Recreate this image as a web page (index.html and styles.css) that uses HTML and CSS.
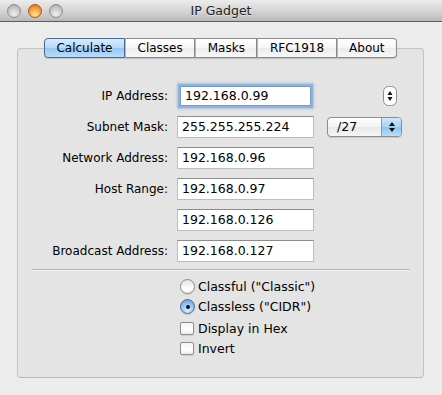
FILE: index.html
```html
<!DOCTYPE html>
<html lang="en">
<head>
  <meta charset="UTF-8" />
  <title>IP Gadget</title>
  <link rel="stylesheet" href="styles.css">
</head>
<body>
  <div class="titlebar">
    <div class="lights">
      <span class="light"></span>
      <span class="light light-orange"></span>
      <span class="light"></span>
    </div>
    <div class="title">IP Gadget</div>
  </div>

  <div class="content">
    <div class="tabs">
      <div class="tab selected">Calculate</div>
      <div class="tab">Classes</div>
      <div class="tab">Masks</div>
      <div class="tab">RFC1918</div>
      <div class="tab">About</div>
    </div>

    <div class="box">
      <div class="form">
        <label class="label">IP Address:</label>
        <div class="field focused">192.168.0.99</div>
        <div class="stepper">
          <svg width="14" height="20" viewBox="0 0 14 20">
            <rect x="0.5" y="0.5" width="13" height="19" rx="5" fill="#fdfdfd" stroke="#8d8d8d"/>
            <polygon points="7,5 4.5,9 9.5,9" fill="#111"/>
            <polygon points="7,15 4.5,11 9.5,11" fill="#111"/>
          </svg>
        </div>

        <label class="label">Subnet Mask:</label>
        <div class="field">255.255.255.224</div>
        <div class="popup">
          <span class="popup-text">/27</span>
          <span class="popup-arrows">
            <svg width="8" height="14" viewBox="0 0 8 14">
              <polygon points="4,2 1,6 7,6" fill="#111"/>
              <polygon points="4,12 1,8 7,8" fill="#111"/>
            </svg>
          </span>
        </div>

        <label class="label">Network Address:</label>
        <div class="field">192.168.0.96</div>
        <div></div>

        <label class="label">Host Range:</label>
        <div class="field">192.168.0.97</div>
        <div></div>

        <label class="label"></label>
        <div class="field">192.168.0.126</div>
        <div></div>

        <label class="label">Broadcast Address:</label>
        <div class="field">192.168.0.127</div>
        <div></div>
      </div>

      <div class="separator"></div>

      <div class="options">
        <div class="option"><span class="radio"></span>Classful ("Classic")</div>
        <div class="option"><span class="radio checked"></span>Classless ("CIDR")</div>
        <div class="option option-gap"><span class="checkbox"></span>Display in Hex</div>
        <div class="option"><span class="checkbox"></span>Invert</div>
      </div>
    </div>
  </div>
</body>
</html>
```

FILE: styles.css
```css
* {
  margin: 0;
  padding: 0;
  box-sizing: border-box;
}

body {
  width: 442px;
  height: 395px;
  overflow: hidden;
  background-color: #ececec;
  font-family: 'DejaVu Sans', 'Liberation Sans', sans-serif;
  font-size: 12px;
  color: #000;
}

/* title bar */
.titlebar {
  height: 22px;
  display: flex;
  align-items: center;
  position: relative;
  background: linear-gradient(#ececec, #d6d6d6 50%, #b9b9b9);
  border-bottom: 1px solid #5e5e5e;
}

.lights {
  display: flex;
  gap: 7px;
  padding-left: 7px;
  position: relative;
  z-index: 1;
}

.light {
  width: 14px;
  height: 14px;
  border-radius: 50%;
  border: 1px solid #8e8e8e;
  background: radial-gradient(circle at 50% 75%, #f0f0f0, #c8c8c8 55%, #a5a5a5);
}

.light-orange {
  border-color: #a8581a;
  background: radial-gradient(circle at 50% 80%, #ffe8a0, #f8a63a 50%, #d86a12);
}

.title {
  position: absolute;
  left: 0;
  right: 0;
  text-align: center;
  font-size: 12.5px;
  color: #222;
  text-shadow: 0 1px 0 rgba(255, 255, 255, 0.5);
}

/* content */
.content {
  padding: 16px 18px 0 17px;
}

.tabs {
  display: flex;
  justify-content: center;
  position: relative;
  z-index: 1;
}

.tab {
  height: 20px;
  line-height: 18px;
  padding: 0 11.5px;
  border: 1px solid #8a8a8a;
  border-left: 1px solid #b9b9b9;
  background: linear-gradient(#ffffff, #f6f6f6 50%, #ececec 51%, #f7f7f7);
  box-shadow: 0 1px 1px rgba(0, 0, 0, 0.15);
}

.tab:first-child {
  border-left-color: #6a6a6a;
  border-radius: 4px 0 0 4px;
}

.tab:last-child {
  border-radius: 0 4px 4px 0;
}

.tab.selected {
  border-color: #4d6a95;
  background: linear-gradient(#d8ecfd, #b4d9f8 50%, #97c7f4 51%, #b9dcfb);
}

.box {
  margin-top: -10px;
  height: 330px;
  border: 1px solid #c4c4c4;
  border-bottom-color: #b8b8b8;
  border-radius: 4px;
  background-color: #e4e4e4;
  padding-top: 36px;
}

.form {
  display: grid;
  grid-template-columns: 152px 137px 81px;
  grid-auto-rows: 22px;
  column-gap: 7px;
  row-gap: 9px;
  align-items: center;
}

.label {
  text-align: right;
  padding-right: 2px;
}

.field {
  height: 22px;
  line-height: 20px;
  padding-left: 4px;
  font-size: 12.5px;
  background-color: #fff;
  border: 1px solid #bdbdbd;
  border-top-color: #8c8c8c;
}

.field.focused {
  width: 131px;
  height: 20px;
  line-height: 18px;
  margin-left: 3px;
  padding-left: 4px;
  border-color: #7c9bc4;
  box-shadow: 0 0 0 2px #8fb3e0, 0 0 2px 3px rgba(120, 160, 215, 0.5);
}

.stepper {
  justify-self: end;
  margin-right: 5px;
  height: 20px;
}

.stepper svg {
  display: block;
}

.popup {
  justify-self: end;
  width: 75px;
  height: 20px;
  display: flex;
  border: 1px solid #8d8d8d;
  border-radius: 4px;
  overflow: hidden;
  background: linear-gradient(#ffffff, #f3f3f3 50%, #e8e8e8 51%, #f6f6f6);
  box-shadow: 0 1px 1px rgba(0, 0, 0, 0.12);
}

.popup-text {
  flex: 1;
  padding-left: 9px;
  line-height: 18px;
  font-size: 12.5px;
}

.popup-arrows {
  width: 20px;
  display: flex;
  align-items: center;
  justify-content: center;
  border-left: 1px solid #7d9cc4;
  background: linear-gradient(#cfe6fc, #a9d2f7 50%, #8ec4f3 51%, #b7dcfb);
}

.popup-arrows svg {
  display: block;
}

.separator {
  margin: 7px 13px 0 14px;
  border-top: 1px solid #b4b4b4;
  border-bottom: 1px solid #f4f4f4;
}

.options {
  padding-left: 162px;
  margin-top: 5px;
}

.option {
  height: 20px;
  display: flex;
  align-items: center;
  gap: 3px;
  font-size: 12.5px;
}

.option-gap {
  margin-top: 2px;
}

.radio {
  width: 15px;
  height: 15px;
  border-radius: 50%;
  border: 1px solid #8a8a8a;
  background: linear-gradient(#e4e4e4, #ffffff 70%, #f4f4f4);
  box-shadow: 0 1px 1px rgba(0, 0, 0, 0.12);
  position: relative;
}

.radio.checked {
  border-color: #4d6a95;
  background: radial-gradient(circle at 50% 80%, #d8ecfd, #8ec4f3 55%, #5a93cf);
}

.radio.checked::after {
  content: '';
  position: absolute;
  left: 5px;
  top: 5px;
  width: 4px;
  height: 4px;
  border-radius: 50%;
  background-color: #111;
}

.checkbox {
  width: 14px;
  height: 13px;
  margin-right: 1px;
  border: 1px solid #8d8d8d;
  border-radius: 2px;
  background: linear-gradient(#f4f4f4, #ffffff 60%, #ececec);
  box-shadow: 0 1px 1px rgba(0, 0, 0, 0.1);
}
```
